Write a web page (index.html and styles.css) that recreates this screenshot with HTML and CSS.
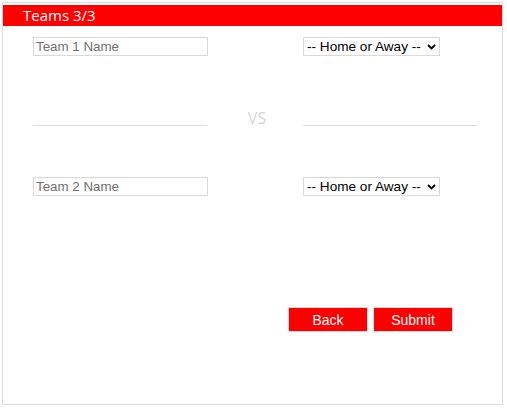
FILE: index.html
```html
<!DOCTYPE html>
<html>
<head>
<meta charset="utf-8">
<link rel="stylesheet" href="styles.css">
</head>
<body>
<div class="panel">
  <div class="header">Teams 3/3</div>
  <div class="content">
    <div class="row">
      <input class="name" type="text" placeholder="Team 1 Name">
      <span></span>
      <span class="select-wrap">
        <select class="side"><option>-- Home or Away --</option><option>Home</option><option>Away</option></select>
        <svg class="chev" width="9" height="6" viewBox="0 0 9 6"><path d="M1 1 L4.5 4.5 L8 1" fill="none" stroke="#000" stroke-width="1.8"/></svg>
      </span>
    </div>
    <div class="row vs-row">
      <div class="line"></div>
      <div class="vs">VS</div>
      <div class="line"></div>
    </div>
    <div class="row row2">
      <input class="name" type="text" placeholder="Team 2 Name">
      <span></span>
      <span class="select-wrap">
        <select class="side"><option>-- Home or Away --</option><option>Home</option><option>Away</option></select>
        <svg class="chev" width="9" height="6" viewBox="0 0 9 6"><path d="M1 1 L4.5 4.5 L8 1" fill="none" stroke="#000" stroke-width="1.8"/></svg>
      </span>
    </div>
    <div class="actions">
      <button class="btn">Back</button>
      <button class="btn">Submit</button>
    </div>
  </div>
</div>
</body>
</html>
```
FILE: styles.css
```css
html, body {
  margin: 0;
  padding: 0;
  background: #fff;
}
.panel {
  box-sizing: border-box;
  margin: 2px 0 0 2px;
  width: 501px;
  height: 403px;
  border: 1px solid #dcdcdc;
}
.header {
  margin-top: 2px;
  height: 21px;
  background: #ff0000;
  color: #fff;
  font-family: "Open Sans", sans-serif;
  font-size: 15px;
  line-height: 21px;
  padding-left: 20px;
}
.content {
  padding: 11px 0 0 30px;
}
.row {
  display: grid;
  grid-template-columns: 174px 96px 174px;
  align-items: start;
}
.name {
  box-sizing: border-box;
  width: 175px;
  height: 19px;
  margin: 0;
  border: 1px solid #d9d9d9;
  padding: 0 2px;
  font-family: "Liberation Sans", Arial, sans-serif;
  font-size: 13.33px;
  outline: none;
}
.name::placeholder {
  color: #6f6f6f;
}
.select-wrap {
  position: relative;
  display: inline-block;
  width: 137px;
  height: 19px;
}
.side {
  -webkit-appearance: none;
  appearance: none;
  box-sizing: border-box;
  width: 137px;
  height: 19px;
  margin: 0;
  border: 1px solid #d9d9d9;
  border-radius: 0;
  background: #fff;
  padding: 0 0 0 3px;
  font-family: "Liberation Sans", Arial, sans-serif;
  font-size: 13.6px;
  color: #000;
}
.chev {
  position: absolute;
  left: 124px;
  top: 7px;
  pointer-events: none;
}
.vs-row {
  margin-top: 52px;
  height: 18px;
  align-items: end;
}
.line {
  height: 1px;
  background: #dcdcdc;
}
.vs {
  text-align: center;
  font-family: "Open Sans", sans-serif;
  font-size: 16px;
  line-height: 18px;
  color: #d4d4d4;
  align-self: start;
  position: relative;
  left: 2px;
  top: 1px;
}
.row2 {
  margin-top: 51px;
}
.actions {
  display: flex;
  gap: 5px;
  margin-top: 111px;
  padding-left: 255px;
}
.btn {
  box-sizing: border-box;
  width: 80px;
  height: 25px;
  margin: 0;
  padding: 0;
  border: 1px solid #dcdcdc;
  background: #ff0000;
  color: #fff;
  font-family: "Liberation Sans", Arial, sans-serif;
  font-size: 14px;
  cursor: pointer;
}
```
